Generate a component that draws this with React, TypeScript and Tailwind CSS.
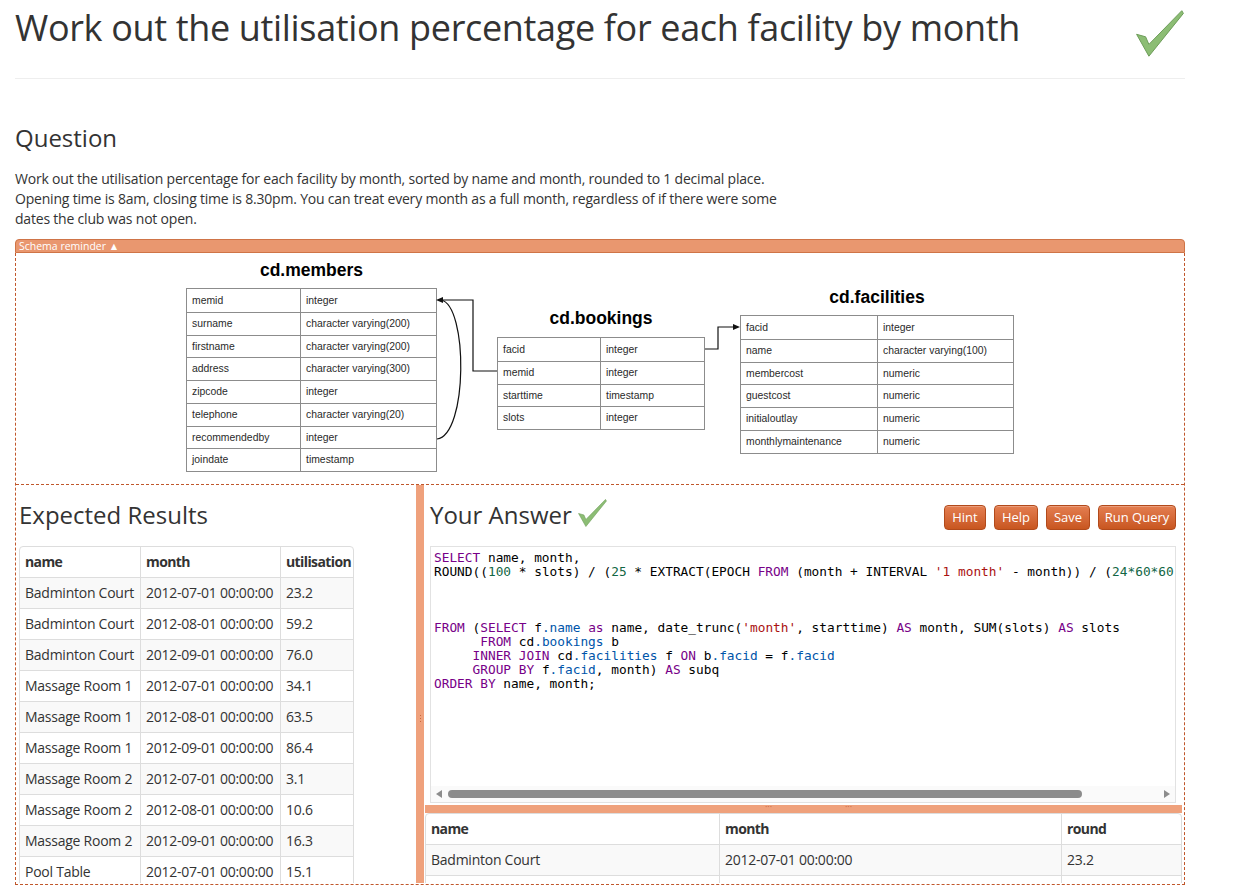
import React from "react";

type Seg = [string, string?];

const K = "text-[#770088]";
const N = "text-[#116644]";
const S = "text-[#aa1111]";
const V = "text-[#0055aa]";

const code: Seg[][] = [
  [["SELECT", K], [" name, month,"]],
  [
    ["ROUND(("],
    ["100", N],
    [" * slots) / ("],
    ["25", N],
    [" * EXTRACT(EPOCH "],
    ["FROM", K],
    [" (month + INTERVAL "],
    ["'1 month'", S],
    [" - month)) / ("],
    ["24*60*60", N],
    [")), "],
    ["1", N],
    [")"],
  ],
  [],
  [],
  [],
  [
    ["FROM", K],
    [" ("],
    ["SELECT", K],
    [" f"],
    [".name", V],
    [" "],
    ["as", K],
    [" name, date_trunc("],
    ["'month'", S],
    [", starttime) "],
    ["AS", K],
    [" month, SUM(slots) "],
    ["AS", K],
    [" slots"],
  ],
  [["      "], ["FROM", K], [" cd"], [".bookings", V], [" b"]],
  [
    ["     "],
    ["INNER JOIN", K],
    [" cd"],
    [".facilities", V],
    [" f "],
    ["ON", K],
    [" b"],
    [".facid", V],
    [" = f"],
    [".facid", V],
  ],
  [["     "], ["GROUP BY", K], [" f"], [".facid", V], [", month) "], ["AS", K], [" subq"]],
  [["ORDER BY", K], [" name, month;"]],
];

const expected = [
  ["Badminton Court", "2012-07-01 00:00:00", "23.2"],
  ["Badminton Court", "2012-08-01 00:00:00", "59.2"],
  ["Badminton Court", "2012-09-01 00:00:00", "76.0"],
  ["Massage Room 1", "2012-07-01 00:00:00", "34.1"],
  ["Massage Room 1", "2012-08-01 00:00:00", "63.5"],
  ["Massage Room 1", "2012-09-01 00:00:00", "86.4"],
  ["Massage Room 2", "2012-07-01 00:00:00", "3.1"],
  ["Massage Room 2", "2012-08-01 00:00:00", "10.6"],
  ["Massage Room 2", "2012-09-01 00:00:00", "16.3"],
  ["Pool Table", "2012-07-01 00:00:00", "15.1"],
  ["Pool Table", "2012-08-01 00:00:00", "23.9"],
];

const results = [
  ["Badminton Court", "2012-07-01 00:00:00", "23.2"],
  ["Badminton Court", "2012-08-01 00:00:00", "59.2"],
];

const members = [
  ["memid", "integer"],
  ["surname", "character varying(200)"],
  ["firstname", "character varying(200)"],
  ["address", "character varying(300)"],
  ["zipcode", "integer"],
  ["telephone", "character varying(20)"],
  ["recommendedby", "integer"],
  ["joindate", "timestamp"],
];

const bookings = [
  ["facid", "integer"],
  ["memid", "integer"],
  ["starttime", "timestamp"],
  ["slots", "integer"],
];

const facilities = [
  ["facid", "integer"],
  ["name", "character varying(100)"],
  ["membercost", "numeric"],
  ["guestcost", "numeric"],
  ["initialoutlay", "numeric"],
  ["monthlymaintenance", "numeric"],
];

function Check({ className }: { className?: string }) {
  return (
    <svg viewBox="0 0 48 47" className={className}>
      <path
        d="M0.6 24.3 L9.6 26.8 L12.9 34.4 L45.8 0.7 L47.4 3.4 L12.9 46.2 Z"
        fill="#8cbd74"
        stroke="#6e9d5a"
        strokeWidth="1"
        strokeLinejoin="round"
      />
    </svg>
  );
}

function SchemaTable({
  rows,
  className,
  col1,
}: {
  rows: string[][];
  className: string;
  col1: string;
}) {
  return (
    <div className={`absolute border border-[#8c8c8c] bg-white ${className}`}>
      {rows.map((r, i) => (
        <div key={i} className={`flex h-[22.75px] items-center ${i ? "border-t border-[#8c8c8c]" : ""}`}>
          <div className={`${col1} h-full flex items-center pl-[5px] border-r border-[#8c8c8c]`}>{r[0]}</div>
          <div className="flex-1 h-full flex items-center pl-[5px]">{r[1]}</div>
        </div>
      ))}
    </div>
  );
}

function Btn({ label, w }: { label: string; w: string }) {
  return (
    <button
      type="button"
      className={`${w} h-[25px] rounded-[4px] border border-[#b24a1b] bg-gradient-to-b from-[#e47e50] to-[#c8561f] text-[13px] leading-[23px] text-white shadow-[inset_0_1px_0_rgba(255,255,255,0.25)]`}
    >
      {label}
    </button>
  );
}

function DataTable({
  head,
  rows,
  cols,
  className,
}: {
  head: string[];
  rows: string[][];
  cols: string[];
  className: string;
}) {
  return (
    <table
      className={`shrink-0 table-fixed border-separate border-spacing-0 border border-[#dddddd] rounded-[4px] text-[14px] leading-[20px] tracking-[-0.25px] text-[#333] ${className}`}
    >
      <colgroup>
        {cols.map((c, i) => (
          <col key={i} className={c} />
        ))}
      </colgroup>
      <thead>
        <tr>
          {head.map((h, i) => (
            <th
              key={i}
              className={`px-[5px] py-[5px] text-left font-bold tracking-[-0.6px] whitespace-nowrap ${i ? "border-l border-[#dddddd]" : ""}`}
            >
              {h}
            </th>
          ))}
        </tr>
      </thead>
      <tbody>
        {rows.map((r, ri) => (
          <tr key={ri} className={ri % 2 === 0 ? "bg-[#f9f9f9]" : "bg-white"}>
            {r.map((c, i) => (
              <td
                key={i}
                className={`px-[5px] py-[5px] whitespace-nowrap border-t border-[#dddddd] ${i ? "border-l" : ""}`}
              >
                {c}
              </td>
            ))}
          </tr>
        ))}
      </tbody>
    </table>
  );
}

export default function App() {
  return (
    <div className="min-h-[889px] bg-white font-['Open_Sans',sans-serif] text-[#333]">
      <div className="w-[1170px] ml-[15px]">
        {/* header */}
        <div className="flex justify-between h-[79px] pt-[8px] border-b border-[#eeeeee]">
          <h1 className="text-[36px] leading-[40px] font-normal tracking-[-0.34px]">
            Work out the utilisation percentage for each facility by month
          </h1>
          <Check className="w-[48px] h-[47px] mt-[2px] mr-[1px]" />
        </div>

        <h2 className="mt-[44px] text-[24px] leading-[30px]">Question</h2>
        <p className="mt-[16px] text-[14px] leading-[20px] tracking-[-0.2px]">
          Work out the utilisation percentage for each facility by month, sorted by name and month, rounded to 1 decimal place.
          <br />
          Opening time is 8am, closing time is 8.30pm. You can treat every month as a full month, regardless of if there were some
          <br />
          dates the club was not open.
        </p>

        {/* schema reminder */}
        <div className="mt-[10px] h-[14px] rounded-t-[4px] border border-[#cf7447] bg-[#e9976f] pl-[3px] text-[10.5px] leading-[12px] text-white">
          Schema reminder ▲
        </div>
        <div className="h-[632px] border border-t-0 border-dashed border-[#c0572b] flex flex-col">
          <div className="relative shrink-0 h-[232px] border-b border-dashed border-[#c0572b] font-['Liberation_Sans',Arial,sans-serif] text-[10.4px] text-[#2a2a2a]">
            <div className="absolute left-[170px] top-[7px] w-[251px] text-center text-[17.5px] leading-[20px] font-bold text-black">
              cd.members
            </div>
            <SchemaTable rows={members} className="left-[170px] top-[35px] w-[251px]" col1="w-[114px]" />
            <div className="absolute left-[481px] top-[55px] w-[208px] text-center text-[17.5px] leading-[20px] font-bold text-black">
              cd.bookings
            </div>
            <SchemaTable rows={bookings} className="left-[481px] top-[84px] w-[208px]" col1="w-[103px]" />
            <div className="absolute left-[724px] top-[34px] w-[274px] text-center text-[17.5px] leading-[20px] font-bold text-black">
              cd.facilities
            </div>
            <SchemaTable rows={facilities} className="left-[724px] top-[62px] w-[274px]" col1="w-[137px]" />
            <svg className="absolute inset-0 w-full h-full pointer-events-none" fill="none">
              <path d="M424 47 H457 V118 H481" stroke="#111" strokeWidth="1.2" />
              <path d="M421 186 C452 182 452 52 425 47" stroke="#111" strokeWidth="1.2" />
              <path d="M420 47 L427 44 L427 50 Z" fill="#111" />
              <path d="M689 96 H702 V74 H718" stroke="#111" strokeWidth="1.2" />
              <path d="M724 74 L717 71 L717 77 Z" fill="#111" />
            </svg>
          </div>

          <div className="flex shrink-0 h-[398px] overflow-hidden">
            {/* expected results */}
            <div className="w-[400px] shrink-0 pl-[3px] pt-[15px] overflow-hidden">
              <h3 className="text-[24px] leading-[30px]">Expected Results</h3>
              <DataTable
                head={["name", "month", "utilisation"]}
                rows={expected}
                cols={["w-[120px]", "w-[140px]", "w-[73px]"]}
                className="mt-[16px] w-[335px]"
              />
            </div>

            {/* vertical splitter */}
            <div className="w-[8px] shrink-0 bg-[#efa17c] flex flex-col items-center justify-center gap-[2px] pt-[68px]">
              <span className="w-[1px] h-[1px] bg-[#c9683c]" />
              <span className="w-[1px] h-[1px] bg-[#c9683c]" />
              <span className="w-[1px] h-[1px] bg-[#c9683c]" />
            </div>

            {/* your answer */}
            <div className="flex-1 flex flex-col overflow-hidden">
              <div className="shrink-0 pl-[6px] pr-[8px] pt-[15px]">
                <div className="flex items-end justify-between">
                  <h3 className="flex items-center gap-[6px] text-[24px] leading-[30px]">
                    Your Answer
                    <Check className="w-[29px] h-[28px] mt-[-4px]" />
                  </h3>
                  <div className="flex gap-[8px]">
                    <Btn label="Hint" w="w-[42px]" />
                    <Btn label="Help" w="w-[44px]" />
                    <Btn label="Save" w="w-[44px]" />
                    <Btn label="Run Query" w="w-[78px]" />
                  </div>
                </div>
                <div className="mt-[16px] h-[257px] border border-[#e2e2e2] bg-white flex flex-col">
                  <div className="flex-1 overflow-hidden pl-[3px] pt-[4px] font-['DejaVu_Sans_Mono',monospace] text-[12.8px] leading-[14px] text-black">
                    {code.map((line, i) => (
                      <div key={i} className="h-[14px] whitespace-pre">
                        {line.map((s, j) => (
                          <span key={j} className={s[1]}>
                            {s[0]}
                          </span>
                        ))}
                      </div>
                    ))}
                  </div>
                  <div className="h-[16px] shrink-0 bg-[#fafafa] flex items-center px-[5px] gap-[6px]">
                    <svg viewBox="0 0 6 8" className="w-[6px] h-[8px]">
                      <path d="M6 0 L0 4 L6 8 Z" fill="#8c8c8c" />
                    </svg>
                    <div className="flex-1 h-[8px]">
                      <div className="w-[634px] h-[8px] rounded-[4px] bg-[#8c8c8c]" />
                    </div>
                    <svg viewBox="0 0 6 8" className="w-[6px] h-[8px]">
                      <path d="M0 0 L6 4 L0 8 Z" fill="#8c8c8c" />
                    </svg>
                  </div>
                </div>
              </div>

              {/* horizontal splitter */}
              <div className="shrink-0 mt-[2px] ml-[1px] mr-[2px] h-[8px] bg-[#efa17c] relative">
                <span className="absolute left-[340px] top-[-3px] text-[9px] leading-[9px] text-[#c9683c]">···</span>
                <span className="absolute left-[420px] top-[-3px] text-[9px] leading-[9px] text-[#c9683c]">···</span>
              </div>

              <DataTable
                head={["name", "month", "round"]}
                rows={results}
                cols={["w-[293px]", "w-[342px]", "w-[120px]"]}
                className="ml-[1px] w-[756px]"
              />
            </div>
          </div>
        </div>
      </div>
    </div>
  );
}
